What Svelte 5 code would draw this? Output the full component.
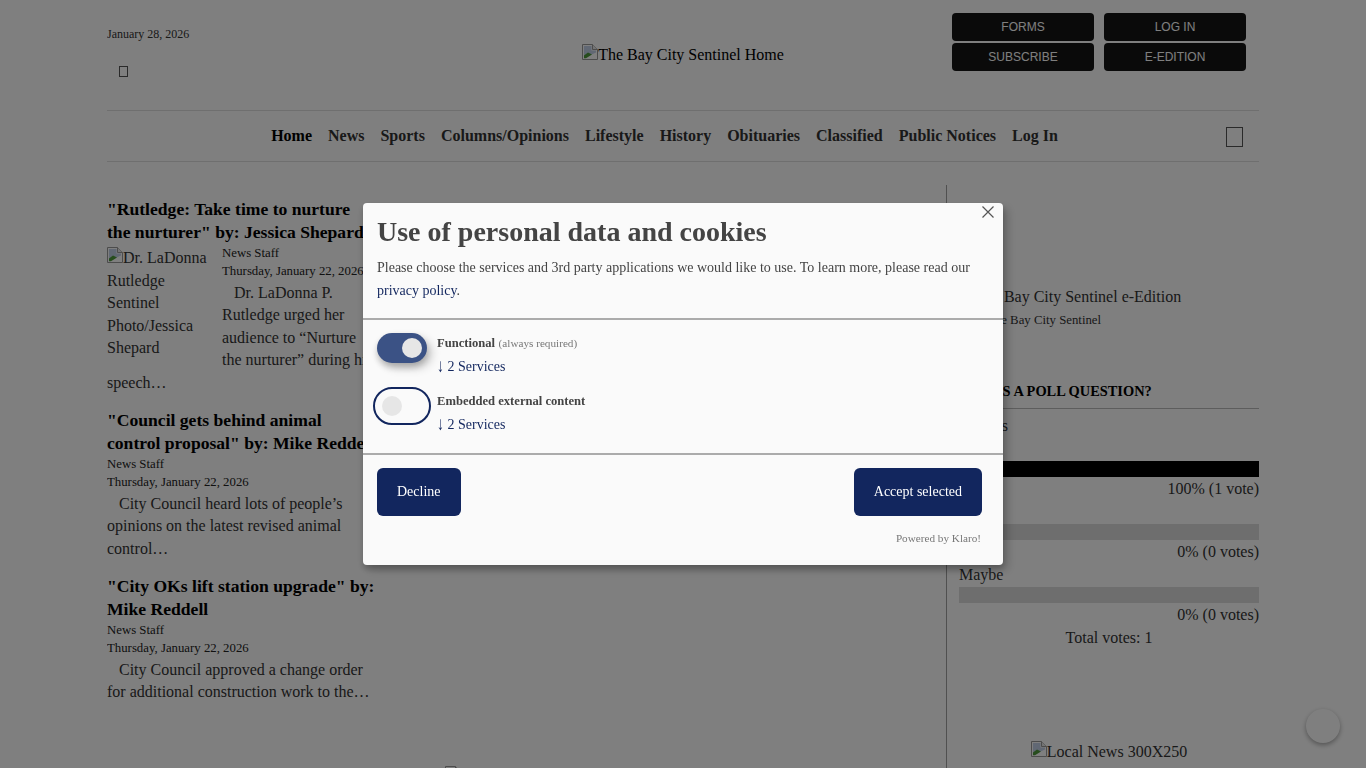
<script>
	const navItems = ['Home', 'News', 'Sports', 'Columns/Opinions', 'Lifestyle', 'History', 'Obituaries', 'Classified', 'Public Notices', 'Log In'];
	const headerLinks = ['FORMS', 'LOG IN', 'SUBSCRIBE', 'E-EDITION'];

	const articles = [
		{
			title: '"Rutledge: Take time to nurture the nurturer" by: Jessica Shepard',
			date: 'Thursday, January 22, 2026',
			body: 'Dr. LaDonna P. Rutledge urged her audience to “Nurture the nurturer” during his speech…',
			alt: 'Dr. LaDonna Rutledge Sentinel Photo/Jessica Shepard'
		},
		{
			title: '"Council gets behind animal control proposal" by: Mike Reddell',
			date: 'Thursday, January 22, 2026',
			body: 'City Council heard lots of people’s opinions on the latest revised animal control…'
		},
		{
			title: '"City OKs lift station upgrade" by: Mike Reddell',
			date: 'Thursday, January 22, 2026',
			body: 'City Council approved a change order for additional construction work to the…'
		}
	];

	const pollOptions = [
		{ label: 'Yes', pct: 100, result: '100% (1 vote)' },
		{ label: 'No', pct: 0, result: '0% (0 votes)' },
		{ label: 'Maybe', pct: 0, result: '0% (0 votes)' }
	];
</script>

{#snippet brokenImg()}
	<svg class="broken" width="16" height="16" viewBox="0 0 16 16" aria-hidden="true">
		<path d="M0.5 0.5H10.5L15.5 5.5V15.5H0.5Z" fill="#fff" stroke="#999" />
		<path d="M10.5 0.5V5.5H15.5" fill="#e8e8e8" stroke="#999" />
		<path d="M2 2H9.5V6.5H14V8.5L2 14Z" fill="#c3d0e8" />
		<path d="M2 14.2V11.5L6 8.5L10 10.5L4 14.2Z" fill="#4e9a3c" />
		<path d="M6 14.2L14 10.5V14.2Z" fill="#fff" />
	</svg>
{/snippet}

<div class="page">
	<header class="top">
		<div class="top-left">
			<div class="date">January 28, 2026</div>
			<span class="tofu small"></span>
		</div>
		<a class="logo" href="#home">{@render brokenImg()}The Bay City Sentinel Home</a>
		<div class="top-links">
			{#each headerLinks as link}
				<a class="top-link" href="#top">{link}</a>
			{/each}
		</div>
	</header>

	<nav class="mainnav">
		<ul>
			{#each navItems as item, i}
				<li class:active={i === 0}>{item}</li>
			{/each}
		</ul>
		<span class="tofu large"></span>
	</nav>

	<div class="content">
		<main class="stories">
			{#each articles as article}
				<article class="story">
					<h2>{article.title}</h2>
					{#if article.alt}
						<div class="thumb">{@render brokenImg()}{article.alt}</div>
					{/if}
					<div class="meta">News Staff</div>
					<div class="meta">{article.date}</div>
					<p>{article.body}</p>
				</article>
			{/each}
			<div class="more">{@render brokenImg()}</div>
		</main>

		<aside class="side">
			<div class="edition">
				<div class="edition-title">The Bay City Sentinel e-Edition</div>
				<div class="edition-sub">The Bay City Sentinel</div>
			</div>

			<h3 class="poll-title">THIS IS A POLL QUESTION?</h3>
			<div class="poll">
				<div>Always</div>
				{#each pollOptions as opt}
					<div class="poll-label">{opt.label}</div>
					<div class="bar"><div class="fill" style="width: {opt.pct}%"></div></div>
					<div class="poll-result">{opt.result}</div>
				{/each}
				<div class="poll-total">Total votes: 1</div>
			</div>

			<div class="ad">{@render brokenImg()}Local News 300X250</div>
		</aside>
	</div>
</div>

<button class="to-top" aria-label="Back to top"></button>

<div class="overlay">
	<div class="modal">
		<button class="close" aria-label="Close">
			<svg width="12" height="12" viewBox="0 0 12 12"><path d="M0.5 0.5L11.5 11.5M11.5 0.5L0.5 11.5" stroke="#555" stroke-width="1.2" fill="none" /></svg>
		</button>
		<div class="modal-head">
			<h1>Use of personal data and cookies</h1>
			<p>Please choose the services and 3rd party applications we would like to use. To learn more, please read our <a href="#privacy">privacy policy</a>.</p>
		</div>
		<div class="modal-body">
			<div class="purpose">
				<span class="switch on"><span class="knob"></span></span>
				<div class="purpose-text">
					<div><b>Functional</b> <small>(always required)</small></div>
					<div class="services"><span class="arrow">↓</span> 2 Services</div>
				</div>
			</div>
			<div class="purpose">
				<span class="switch focused"><span class="knob"></span></span>
				<div class="purpose-text">
					<div><b>Embedded external content</b></div>
					<div class="services"><span class="arrow">↓</span> 2 Services</div>
				</div>
			</div>
		</div>
		<div class="modal-foot">
			<div class="actions">
				<button class="btn">Decline</button>
				<button class="btn">Accept selected</button>
			</div>
			<div class="powered">Powered by Klaro!</div>
		</div>
	</div>
</div>

<style>
	:global(body) {
		background: #fff;
		font-family: "Liberation Serif", "Times New Roman", serif;
		height: 768px;
		overflow: hidden;
	}

	.page {
		width: 1152px;
		height: 768px;
		overflow: hidden;
		margin: 0 auto;
		color: #333;
		font-size: 16px;
	}

	.top {
		display: grid;
		grid-template-columns: 1fr 1fr 1fr;
		height: 111px;
		box-sizing: border-box;
		border-bottom: 1px solid #dedede;
	}

	.top-left {
		padding-top: 27px;
	}

	.date {
		font-size: 12px;
		line-height: 15px;
	}

	.tofu {
		display: block;
		box-sizing: border-box;
		border: 1px solid #555;
	}

	.tofu.small {
		width: 9px;
		height: 11px;
		margin: 24px 0 0 12px;
	}

	.logo {
		display: flex;
		align-self: start;
		justify-content: center;
		color: #000;
		text-decoration: none;
		line-height: 20px;
		margin-top: 45px;
		white-space: nowrap;
	}

	.logo .broken {
		margin-top: -1px;
	}

	.broken {
		vertical-align: baseline;
		flex: none;
	}

	.top-links {
		display: grid;
		grid-template-columns: 142px 142px;
		gap: 2px 10px;
		justify-content: end;
		align-content: start;
		padding: 13px 13px 0 0;
	}

	.top-link {
		height: 28px;
		line-height: 28px;
		border-radius: 4px;
		background: #141414;
		color: #fff;
		text-align: center;
		text-decoration: none;
		font-family: "Liberation Sans", Arial, sans-serif;
		font-size: 12px;
	}

	.mainnav {
		display: flex;
		align-items: center;
		height: 51px;
		box-sizing: border-box;
		border-bottom: 1px solid #dedede;
	}

	.mainnav ul {
		flex: 1;
		display: flex;
		justify-content: center;
		gap: 16px;
		list-style: none;
		margin: 0;
		padding: 0;
		font-weight: bold;
		font-size: 16px;
	}

	.mainnav li.active {
		color: #000;
	}

	.tofu.large {
		width: 17px;
		height: 20px;
		margin: 1px 16px 0 4px;
	}

	.content {
		display: grid;
		grid-template-columns: 839px 313px;
		margin-top: 23px;
	}

	.stories {
		padding-top: 13px;
	}

	.story {
		width: 270px;
		margin-bottom: 15px;
		display: flow-root;
	}

	.story h2 {
		margin: 0;
		font-size: 17.6px;
		line-height: 23px;
		color: #000;
	}

	.thumb {
		float: left;
		width: 100px;
		margin: 3px 15px 7px 0;
		font-size: 16px;
		line-height: 22.5px;
	}

	.meta {
		font-size: 12.8px;
		line-height: 18px;
		color: #222;
	}

	.story p {
		margin: 1.5px 0 0;
		font-size: 16px;
		line-height: 22.5px;
		text-indent: 12px;
	}

	.more {
		margin: 62px 0 0 338px;
		height: 16px;
	}

	.side {
		min-height: 640px;
		border-left: 1px solid #a0a0a0;
		padding-left: 12px;
	}

	.edition {
		padding-top: 100px;
		height: 162px;
		box-sizing: border-box;
	}

	.edition-title {
		padding-left: 16px;
		line-height: 23px;
	}

	.edition-sub {
		padding: 1px 0 0 28px;
		font-size: 12.8px;
		line-height: 23px;
	}

	.poll-title {
		margin: 33px 0 0;
		font-size: 14.4px;
		line-height: 22px;
		height: 28px;
		color: #000;
		border-bottom: 1px solid #bbb;
	}

	.poll {
		padding-top: 6px;
		line-height: 22.5px;
	}

	.bar {
		height: 16px;
		margin-top: 0.5px;
		background: #ddd;
	}

	.fill {
		height: 100%;
		background: #000;
	}

	.poll-result {
		margin-top: 1.5px;
		text-align: right;
	}

	.poll-total {
		text-align: center;
	}

	.ad {
		margin-top: 92px;
		text-align: center;
	}

	.to-top {
		position: fixed;
		right: 26px;
		bottom: 25px;
		width: 34px;
		height: 34px;
		border: 0;
		border-radius: 50%;
		background: #fff;
		box-shadow: 0 2px 5px rgba(0, 0, 0, 0.35);
	}

	.overlay {
		position: fixed;
		inset: 0;
		background: rgba(0, 0, 0, 0.5);
	}

	.modal {
		position: absolute;
		left: 363px;
		top: 203px;
		width: 640px;
		background: #fafafa;
		color: #444;
		border-radius: 4px;
		box-shadow: 0 4px 6px rgba(0, 0, 0, 0.2), 5px 5px 10px rgba(0, 0, 0, 0.19);
		font-size: 14px;
	}

	.close {
		position: absolute;
		top: 3px;
		right: 9px;
		width: 12px;
		height: 12px;
		padding: 0;
		border: 0;
		background: none;
		display: flex;
	}

	.modal-head {
		padding: 14px 14px 16px;
		border-bottom: 2px solid #ababab;
		height: 117px;
		box-sizing: border-box;
	}

	.modal-head h1 {
		margin: 0;
		font-size: 28px;
		line-height: 30px;
		color: #444;
	}

	.modal-head p {
		margin: 9px 0 0;
		line-height: 23px;
	}

	.modal-head a,
	.services {
		color: #12265e;
		text-decoration: none;
	}

	.modal-body {
		padding: 13px 14px 0;
		height: 135px;
		box-sizing: border-box;
		border-bottom: 2px solid #ababab;
	}

	.purpose {
		display: flex;
		gap: 10px;
		margin-bottom: 10px;
		height: 48px;
	}

	.switch {
		flex: none;
		position: relative;
		width: 50px;
		height: 30px;
		border-radius: 30px;
		background: #fafafa;
	}

	.switch.on {
		background: #3b5285;
		box-shadow: 0 4px 6px rgba(0, 0, 0, 0.2), 5px 5px 10px rgba(0, 0, 0, 0.19);
	}

	.switch.focused {
		outline: 2px solid #12265e;
		outline-offset: 2px;
	}

	.knob {
		position: absolute;
		left: 5px;
		top: 5px;
		width: 20px;
		height: 20px;
		border-radius: 50%;
		background: #e6e6e6;
	}

	.switch.on .knob {
		left: 25px;
	}

	.purpose-text {
		padding-top: 1px;
		line-height: 18px;
	}

	.purpose-text b {
		font-size: 12.6px;
	}

	.purpose-text small {
		font-size: 11.2px;
		color: #777;
	}

	.services {
		margin-top: 6px;
	}

	.arrow {
		display: inline-block;
		transform: scaleY(1.35);
	}

	.modal-foot {
		padding: 13px 21px 20px 14px;
	}

	.actions {
		display: flex;
		justify-content: space-between;
	}

	.btn {
		height: 48px;
		padding: 0 20px;
		border: 0;
		border-radius: 6px;
		background: #12265e;
		color: #fff;
		font: 14px "Liberation Serif", "Times New Roman", serif;
		font-weight: normal;
	}

	.powered {
		text-align: right;
		font-size: 11.2px;
		line-height: 14px;
		margin-top: 15px;
		color: #777;
		padding-right: 1px;
	}
</style>
